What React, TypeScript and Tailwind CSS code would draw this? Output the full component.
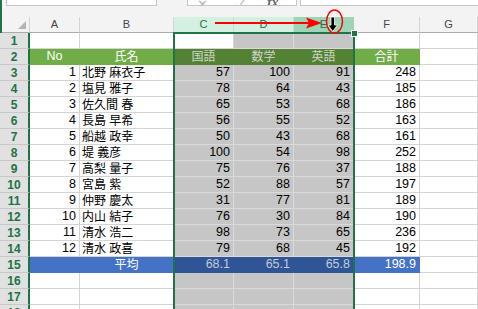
import type { ReactNode } from 'react'

const data: [number, string, number, number, number, number][] = [
  [1, '北野 麻衣子', 57, 100, 91, 248],
  [2, '塩見 雅子', 78, 64, 43, 185],
  [3, '佐久間 春', 65, 53, 68, 186],
  [4, '長島 早希', 56, 55, 52, 163],
  [5, '船越 政幸', 50, 43, 68, 161],
  [6, '堤 義彦', 100, 54, 98, 252],
  [7, '高梨 量子', 75, 76, 37, 188],
  [8, '宮島 紫', 52, 88, 57, 197],
  [9, '仲野 慶太', 31, 77, 81, 189],
  [10, '内山 結子', 76, 30, 84, 190],
  [11, '清水 浩二', 98, 73, 65, 236],
  [12, '清水 政喜', 79, 68, 45, 192],
]

const widths = ['w-[50px]', 'w-[94px]', 'w-[60px]', 'w-[60px]', 'w-[60px]', 'w-[66px]', 'flex-1']

// plain cell / selected (gray) cell
const plain = 'bg-white border-[#d4d4d4]'
const sel = 'bg-[#c6c6c6] border-[#dadada]'

function Cell({ w, cls, children }: { w: string; cls: string; children?: ReactNode }) {
  return (
    <div className={`${w} h-full shrink-0 border-r border-b flex items-center overflow-hidden whitespace-nowrap ${cls}`}>
      {children}
    </div>
  )
}

function RowHead({ n }: { n: number }) {
  return (
    <div className="w-[30px] h-full shrink-0 bg-[#e1e1e1] border-b border-b-[#c8c8c8] border-r-2 border-r-[#217346] flex items-center justify-center text-[12px] font-bold text-[#217346]">
      {n}
    </div>
  )
}

function Row({ n, children }: { n: number; children: ReactNode }) {
  return (
    <div className="flex h-[16px]">
      <RowHead n={n} />
      {children}
    </div>
  )
}

function EmptyRow({ n, active }: { n: number; active?: boolean }) {
  return (
    <Row n={n}>
      {widths.map((w, i) => (
        <Cell key={i} w={w} cls={i >= 2 && i <= 4 && !(active && i === 2) ? sel : plain} />
      ))}
    </Row>
  )
}

function App() {
  const num = 'justify-end pr-[3px] text-[12.5px]'
  return (
    <div className="relative w-[478px] h-[309px] overflow-hidden bg-white font-['Liberation_Sans','Noto_Sans_CJK_JP',sans-serif] text-black">
      {/* formula bar, mostly scrolled off */}
      <div className="flex h-[17px] bg-[#f3f3f3] border-l-2 border-[#217346]">
        <div className="ml-[4px] w-[151px] h-[6px] bg-white border-x border-b border-[#c6c6c6]" />
        <div className="ml-[30px] w-[110px] h-[6px] bg-white border-x border-b border-[#c6c6c6] overflow-hidden flex items-end text-[#b4b4b4]">
          <span className="ml-[9px] -mb-[6px] text-[13px] leading-none">✕</span>
          <span className="ml-[28px] -mb-[6px] text-[13px] leading-none">✓</span>
          <span className="ml-[22px] -mb-[5px] text-[14px] leading-none italic font-bold font-['Liberation_Serif',serif] text-[#666]">fx</span>
        </div>
        <div className="ml-[3px] flex-1 h-[6px] bg-white border-l border-b border-[#c6c6c6]" />
      </div>

      {/* column headers */}
      <div className="flex h-[16px] border-l-2 border-[#217346] text-[11px]">
        <div className="relative w-[28px] h-full shrink-0 bg-[#f3f3f3] border-r border-r-[#d4d4d4] border-b border-b-[#ababab]">
          <div className="absolute right-[3px] bottom-[3px] w-0 h-0 border-l-[8px] border-l-transparent border-b-[8px] border-b-[#b4b4b4]" />
        </div>
        {['A', 'B', 'C', 'D', 'E', 'F', 'G'].map((c, i) => {
          const cls =
            i === 2 || i === 3
              ? 'bg-[#d3f0e0] border-r-[#c2e2cf] border-b-[#217346] text-[#217346]'
              : i === 4
                ? 'bg-[#9fd5b7] border-r-[#9fd5b7] border-b-[#217346] text-[#217346]'
                : 'bg-[#f3f3f3] border-r-[#d4d4d4] border-b-[#ababab] text-[#444]'
          return (
            <Cell key={c} w={widths[i]} cls={`justify-center ${cls}`}>
              {c}
            </Cell>
          )
        })}
      </div>

      <EmptyRow n={1} active />

      {/* header row */}
      <Row n={2}>
        <Cell w={widths[0]} cls="justify-center bg-[#70ad47] border-[#70ad47] text-white text-[12.5px]">No</Cell>
        <Cell w={widths[1]} cls="justify-center bg-[#70ad47] border-[#70ad47] text-white text-[12px]">氏名</Cell>
        {['国語', '数学', '英語'].map(t => (
          <Cell key={t} w="w-[60px]" cls="justify-center bg-[#548235] border-[#548235] text-[#cfd5ca] text-[12px]">
            {t}
          </Cell>
        ))}
        <Cell w={widths[5]} cls="justify-center bg-[#70ad47] border-[#70ad47] text-white text-[12px]">合計</Cell>
        <Cell w={widths[6]} cls={plain} />
      </Row>

      {data.map((r, k) => (
        <Row key={r[0]} n={k + 3}>
          <Cell w={widths[0]} cls={`${plain} ${num}`}>{r[0]}</Cell>
          <Cell w={widths[1]} cls={`${plain} pl-[2px] text-[12px]`}>{r[1]}</Cell>
          <Cell w={widths[2]} cls={`${sel} ${num}`}>{r[2]}</Cell>
          <Cell w={widths[3]} cls={`${sel} ${num}`}>{r[3]}</Cell>
          <Cell w={widths[4]} cls={`${sel} ${num}`}>{r[4]}</Cell>
          <Cell w={widths[5]} cls={`${plain} ${num}`}>{r[5]}</Cell>
          <Cell w={widths[6]} cls={plain} />
        </Row>
      ))}

      {/* average row */}
      <Row n={15}>
        <Cell w={widths[0]} cls="bg-[#4472c4] border-[#4472c4]" />
        <Cell w={widths[1]} cls="justify-center bg-[#4472c4] border-[#4472c4] text-white text-[12px]">平均</Cell>
        {['68.1', '65.1', '65.8'].map(t => (
          <Cell key={t} w="w-[60px]" cls={`bg-[#2f5597] border-[#2f5597] text-[#c3cad8] ${num}`}>
            {t}
          </Cell>
        ))}
        <Cell w={widths[5]} cls={`bg-[#4472c4] border-[#4472c4] text-white ${num}`}>198.9</Cell>
        <Cell w={widths[6]} cls={plain} />
      </Row>

      <EmptyRow n={16} />
      <EmptyRow n={17} />
      <EmptyRow n={18} />

      {/* selection border C:E */}
      <div className="absolute left-[173px] top-[32px] w-[182px] h-[300px] border-2 border-[#217346] pointer-events-none" />
      <div className="absolute left-[351px] top-[30px] w-[7px] h-[7px] bg-[#217346] border border-white" />

      {/* drag annotation */}
      <svg className="absolute left-0 top-0 pointer-events-none" width="478" height="40" viewBox="0 0 478 40">
        <line x1="215" y1="23" x2="309" y2="23" stroke="#ff0000" strokeWidth="2" />
        <polygon points="306,17.5 322,23 306,28.5 309,23" fill="#ff0000" />
        <ellipse cx="334.5" cy="21.5" rx="8" ry="11.5" fill="none" stroke="#ff0000" strokeWidth="1.5" />
        <path d="M331 17 H334.5 V25 H337.5 L332.75 31.5 L328 25 H331 Z" fill="#000" stroke="#fff" strokeWidth="0.8" />
      </svg>
    </div>
  )
}

export default App
